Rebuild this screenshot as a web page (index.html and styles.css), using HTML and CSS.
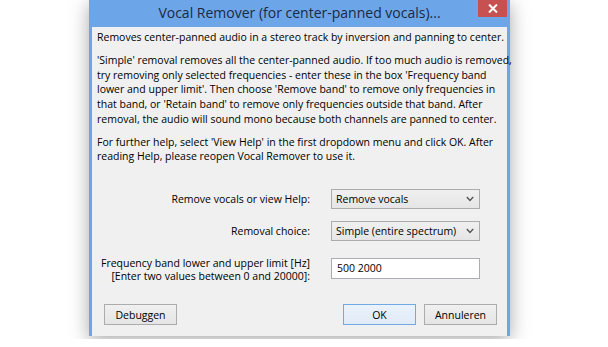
FILE: index.html
```html
<!DOCTYPE html>
<html>
<head>
<meta charset="utf-8">
<link rel="stylesheet" href="styles.css">
</head>
<body>
<div class="window">
  <div class="titlebar">
    <span></span>
    <span class="title">Vocal Remover (for center-panned vocals)...</span>
    <div class="close"><svg width="10" height="9" viewBox="0 0 10 9"><path d="M1 0.5 L9 8.5 M9 0.5 L1 8.5" stroke="#fff" stroke-width="2" fill="none"/></svg></div>
  </div>
  <div class="content">
    <div class="text">
      <p>Removes center-panned audio in a stereo track by inversion and panning to center.</p>
      <p>'Simple' removal removes all the center-panned audio. If too much audio is removed,<br>try removing only selected frequencies - enter these in the box 'Frequency band<br>lower and upper limit'. Then choose 'Remove band' to remove only frequencies in<br>that band, or 'Retain band' to remove only frequencies outside that band. After<br>removal, the audio will sound mono because both channels are panned to center.</p>
      <p>For further help, select 'View Help' in the first dropdown menu and click OK. After<br>reading Help, please reopen Vocal Remover to use it.</p>
    </div>
    <div class="form">
      <label class="lbl">Remove vocals or view Help:</label>
      <div class="combo"><span>Remove vocals</span><svg width="8" height="6" viewBox="0 0 8 6"><polyline points="0.8,1 4,4.4 7.2,1" fill="none" stroke="#555" stroke-width="1.4"/></svg></div>
      <label class="lbl">Removal choice:</label>
      <div class="combo"><span>Simple (entire spectrum)</span><svg width="8" height="6" viewBox="0 0 8 6"><polyline points="0.8,1 4,4.4 7.2,1" fill="none" stroke="#555" stroke-width="1.4"/></svg></div>
      <label class="lbl two">Frequency band lower and upper limit [Hz]<br>[Enter two values between 0 and 20000]:</label>
      <div class="input">500 2000</div>
    </div>
    <div class="buttons">
      <div class="btn">Debuggen</div>
      <div class="spacer"></div>
      <div class="btn default">OK</div>
      <div class="btn">Annuleren</div>
    </div>
  </div>
</div>
</body>
</html>
```

FILE: styles.css
```css
html, body {
  margin: 0;
  padding: 0;
  background: #ffffff;
}
body {
  font-family: "Open Sans", "Noto Sans", sans-serif;
  color: #000;
}
.window {
  width: 421px;
  margin-left: 89px;
  box-shadow: 0 4px 18px rgba(0, 0, 0, 0.35);
  background: #6ca6e8;
}
.titlebar {
  height: 27px;
  display: grid;
  grid-template-columns: 1fr auto 1fr;
  background: #6ca6e8;
}
.title {
  font-size: 14px;
  line-height: 25px;
  color: #1a2944;
  white-space: nowrap;
}
.close {
  justify-self: end;
  align-self: start;
  width: 29px;
  height: 17px;
  margin-right: 3px;
  background: #c75050;
  display: flex;
  align-items: center;
  justify-content: center;
}
.content {
  margin: 0 3px 3px 3px;
  background: #f0f0f0;
  padding: 3px 0 11px 0;
}
.text {
  padding-left: 5px;
  font-size: 10.5px;
  line-height: 14.75px;
}
.text p {
  margin: 0 0 8px 0;
  white-space: nowrap;
}
.text p:last-child {
  margin-bottom: 0;
}
.form {
  margin-top: 25px;
  display: grid;
  grid-template-columns: 1fr 149px;
  column-gap: 21px;
  row-gap: 12px;
  padding-right: 27px;
  font-size: 10.5px;
  align-items: center;
}
.lbl {
  text-align: right;
  line-height: 13px;
  white-space: nowrap;
}
.lbl.two {
  margin-top: 4px;
}
.combo {
  height: 20px;
  box-sizing: border-box;
  border: 1px solid #acacac;
  background: linear-gradient(#f0f0f0, #e5e5e5);
  display: flex;
  align-items: center;
  justify-content: space-between;
  padding: 0 5px 0 4px;
}
.input {
  height: 21px;
  box-sizing: border-box;
  border: 1px solid #abadb3;
  background: #fff;
  display: flex;
  align-items: center;
  padding-left: 5px;
}
.buttons {
  margin-top: 21px;
  display: flex;
  gap: 8px;
  padding: 0 10px 0 12px;
}
.spacer {
  flex: 1;
}
.btn {
  width: 73px;
  height: 21px;
  box-sizing: border-box;
  border: 1px solid #acacac;
  background: linear-gradient(#f0f0f0, #e5e5e5);
  font-size: 10.5px;
  display: flex;
  align-items: center;
  justify-content: center;
}
.btn.default {
  border-color: #6fa9e6;
  background: linear-gradient(#eaf2fb, #e1ebf6);
}
```
